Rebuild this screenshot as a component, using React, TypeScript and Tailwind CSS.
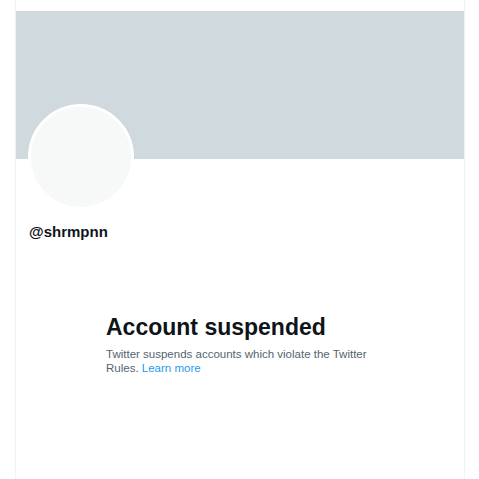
export default function App() {
  return (
    <div className="min-h-[479px] w-[479px] bg-white font-['Liberation_Sans',Arial,sans-serif] text-[#0f1419]">
      <div className="ml-[15px] min-h-[479px] w-[450px] border-x border-[#eff3f4] pt-[11px]">
        <div className="h-[148px] bg-[#cfd9de]" />
        <div className="px-3">
          <div className="-mt-[55px] h-[106px] w-[106px] rounded-full border-[3px] border-white bg-[#f7f9f9]" />
          <div className="mt-[12px] pl-px text-[15px] font-bold leading-5">@shrmpnn</div>
        </div>
        <div className="mt-[71px] pl-[90px] pr-20">
          <h1 className="text-[23px] font-extrabold leading-7">Account suspended</h1>
          <p className="mt-[6px] text-[11.5px] leading-[14px] text-[#536471]">
            Twitter suspends accounts which violate the Twitter Rules.{" "}
            <a className="text-[#1d9bf0]">Learn more</a>
          </p>
        </div>
      </div>
    </div>
  );
}
